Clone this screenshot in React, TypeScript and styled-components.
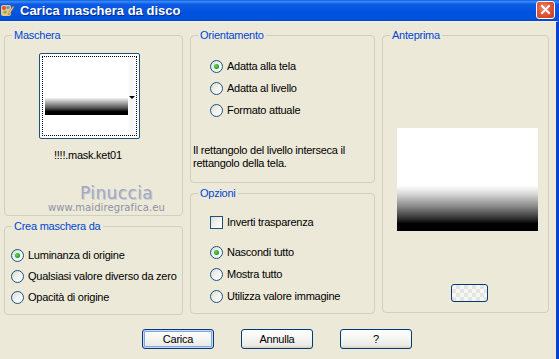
import React from "react";
import styled, { createGlobalStyle } from "styled-components";

const GlobalStyle = createGlobalStyle`
  html, body {
    margin: 0;
    padding: 0;
    background: #ece9d8;
  }
  body {
    font-family: "Liberation Sans", Arial, sans-serif;
    font-size: 11px;
    letter-spacing: -0.25px;
    color: #000;
  }
`;

const Window = styled.div`
  width: 559px;
  height: 359px;
  display: flex;
  flex-direction: column;
  background: #ece9d8;
  overflow: hidden;
`;

const TitleBar = styled.div`
  height: 21px;
  display: flex;
  align-items: center;
  padding: 0 4px 0 0;
  background: linear-gradient(
    to bottom,
    #0a5fe8 0%,
    #3b8bf6 8%,
    #0d5ae3 20%,
    #0053e1 60%,
    #0051dc 88%,
    #0047c5 100%
  );
  color: #fff;
`;

const TitleIcon = styled.div`
  width: 16px;
  height: 16px;
  margin-right: 4px;
  display: flex;
  align-items: center;
`;

const TitleText = styled.div`
  flex: 1;
  font-family: "Liberation Sans", Arial, sans-serif;
  font-weight: bold;
  font-size: 13px;
  letter-spacing: 0;
  text-shadow: 1px 1px 0 #0a2a8a;
`;

const CloseButton = styled.div`
  width: 19px;
  height: 18px;
  margin-top: -2px;
  box-sizing: border-box;
  border: 1px solid #fff;
  border-radius: 3px;
  background: radial-gradient(circle at 40% 35%, #f08c6a 0%, #e0553a 45%, #c8391b 100%);
  display: flex;
  align-items: center;
  justify-content: center;
`;

const Frame = styled.div`
  flex: 1;
  display: flex;
  flex-direction: column;
  border-right: 3px solid #0842d4;
  border-top: 1px solid #f4f2e8;
`;

const Body = styled.div`
  display: grid;
  grid-template-columns: 179px 185px 167px;
  column-gap: 7px;
  padding: 13px 0 0 4px;
`;

const Column = styled.div<{ $gap: number }>`
  display: flex;
  flex-direction: column;
  gap: ${(p) => p.$gap}px;
`;

const Group = styled.div<{ $height: number; $pad?: string }>`
  position: relative;
  box-sizing: border-box;
  height: ${(p) => p.$height}px;
  border: 1px solid #d0d0bf;
  border-radius: 4px;
  padding: ${(p) => p.$pad || "0"};
  display: flex;
  flex-direction: column;
`;

const Legend = styled.span`
  position: absolute;
  top: -8px;
  left: 7px;
  padding: 0 2px 0 2px;
  background: #ece9d8;
  color: #0046d5;
  line-height: 14px;
`;

const MaskThumb = styled.div`
  position: relative;
  box-sizing: border-box;
  width: 101px;
  height: 86px;
  margin-left: 34px;
  border: 1px solid #1c5180;
  border-radius: 2px;
  background: #fff;
  padding: 2px;
`;

const FocusRect = styled.div`
  box-sizing: border-box;
  width: 100%;
  height: 100%;
  border: 1px dotted #000;
  display: flex;
  padding: 0 0 0 2px;
`;

const MaskImage = styled.div`
  width: 83px;
  display: flex;
  flex-direction: column;
  padding-top: 41px;
`;

const MaskBand = styled.div`
  height: 17px;
  background: linear-gradient(to bottom, #f4f4f4 0%, #b0b0b0 25%, #505050 60%, #000 80%, #000 100%);
`;

const ArrowStrip = styled.div`
  flex: 1;
  display: flex;
  justify-content: flex-end;
  padding: 39px 1px 0 0;
  background: linear-gradient(to right, #fff 0%, #f3f3f3 40%, #fafafa 100%);
`;

const Arrow = styled.div`
  width: 0;
  height: 0;
  border-left: 3px solid transparent;
  border-right: 3px solid transparent;
  border-top: 3px solid #000;
`;

const Caption = styled.div`
  margin-top: 10px;
  padding-left: 49px;
  line-height: 13px;
`;

const Watermark = styled.div`
  margin-top: 22px;
  display: flex;
  flex-direction: column;
  align-items: flex-start;
`;

const WaterTitle = styled.div`
  padding-left: 75px;
  font-family: "DejaVu Sans", sans-serif;
  font-size: 17px;
  letter-spacing: 0.4px;
  color: #a6a9bf;
  line-height: 18px;
  text-shadow: 1px 1px 0 #c9cad6;
`;

const WaterUrl = styled.div`
  padding-left: 43px;
  font-family: "DejaVu Sans", sans-serif;
  font-size: 10px;
  letter-spacing: 0.1px;
  color: #8e91a6;
  line-height: 12px;
`;

const OptionList = styled.div<{ $gap: number; $top: number; $left: number }>`
  display: flex;
  flex-direction: column;
  gap: ${(p) => p.$gap}px;
  margin-top: ${(p) => p.$top}px;
  padding-left: ${(p) => p.$left}px;
`;

const Option = styled.label<{ $space?: number }>`
  display: flex;
  align-items: center;
  gap: 4px;
  height: 13px;
  line-height: 13px;
  white-space: nowrap;
  margin-top: ${(p) => p.$space || 0}px;
`;

const RadioCircle = styled.span<{ $on?: boolean }>`
  box-sizing: border-box;
  width: 13px;
  height: 13px;
  border-radius: 50%;
  border: 1px solid #1c5180;
  background: linear-gradient(135deg, #dcdcd5 0%, #f2f2ee 50%, #ffffff 100%);
  display: flex;
  align-items: center;
  justify-content: center;
  flex-shrink: 0;

  &::after {
    content: "";
    display: ${(p) => (p.$on ? "block" : "none")};
    width: 5px;
    height: 5px;
    border-radius: 50%;
    background: radial-gradient(circle at 40% 40%, #5ee05e 0%, #21a121 60%, #1a8a1a 100%);
  }
`;

const CheckBox = styled.span`
  box-sizing: border-box;
  width: 13px;
  height: 13px;
  border: 1px solid #1c5180;
  background: linear-gradient(135deg, #dcdcd5 0%, #f2f2ee 50%, #ffffff 100%);
  flex-shrink: 0;
`;

const Description = styled.p`
  margin: 27px 0 0 2px;
  line-height: 13px;
`;

const Preview = styled.div`
  width: 141px;
  height: 103px;
  margin: 92px 0 0 14px;
  background: linear-gradient(
    to bottom,
    #fff 0%,
    #fff 56%,
    #d8d8d8 64%,
    #8a8a8a 76%,
    #303030 88%,
    #000 93%,
    #000 100%
  );
`;

const SmallButton = styled.div`
  box-sizing: border-box;
  width: 37px;
  height: 18px;
  margin: 53px 0 0 68px;
  border: 1px solid #003c74;
  border-radius: 3px;
  background-color: #f6f6f3;
  background-image: linear-gradient(45deg, #e4e4e0 25%, transparent 25%, transparent 75%, #e4e4e0 75%),
    linear-gradient(45deg, #e4e4e0 25%, transparent 25%, transparent 75%, #e4e4e0 75%);
  background-size: 8px 8px;
  background-position: 0 0, 4px 4px;
`;

const ButtonRow = styled.div`
  display: flex;
  justify-content: center;
  gap: 27px;
  margin-top: 14px;
  padding-right: 2px;
`;

const Button = styled.button<{ $default?: boolean }>`
  box-sizing: border-box;
  width: 72px;
  height: 20px;
  padding: 0;
  border: 1px solid #003c74;
  border-radius: 3px;
  font-family: "Liberation Sans", Arial, sans-serif;
  font-size: 11px;
  letter-spacing: -0.25px;
  color: #000;
  background: linear-gradient(to bottom, #ffffff 0%, #f4f4f0 50%, #ecebe6 85%, #d6d0c5 100%);
  box-shadow: ${(p) =>
    p.$default ? "inset 0 0 0 1px #c6d8f7, inset 0 0 0 2px #7ea6e8" : "none"};
`;

const AppIcon = () => (
  <svg width="15" height="15" viewBox="0 0 15 15">
    <rect x="1" y="2" width="10" height="11" rx="2" fill="#f2c27a" />
    <circle cx="4" cy="5" r="2" fill="#e84c3d" />
    <circle cx="8" cy="4.5" r="1.6" fill="#3aa0e0" />
    <circle cx="5" cy="9" r="1.6" fill="#5cbf4a" />
    <path d="M9 12 L14 4 L13 3 L8 11 Z" fill="#fff3c0" stroke="#8a5a20" strokeWidth="0.6" />
  </svg>
);

const CloseIcon = () => (
  <svg width="11" height="11" viewBox="0 0 11 11">
    <path d="M2 2 L9 9 M9 2 L2 9" stroke="#fff" strokeWidth="2" strokeLinecap="square" />
  </svg>
);

const App: React.FC = () => {
  return (
    <>
      <GlobalStyle />
      <Window>
        <TitleBar>
          <TitleIcon>
            <AppIcon />
          </TitleIcon>
          <TitleText>Carica maschera da disco</TitleText>
          <CloseButton>
            <CloseIcon />
          </CloseButton>
        </TitleBar>
        <Frame>
          <Body>
            <Column $gap={10}>
              <Group $height={181} $pad="17px 0 0 0">
                <Legend>Maschera</Legend>
                <MaskThumb>
                  <FocusRect>
                    <MaskImage>
                      <MaskBand />
                    </MaskImage>
                    <ArrowStrip>
                      <Arrow />
                    </ArrowStrip>
                  </FocusRect>
                </MaskThumb>
                <Caption>!!!!.mask.ket01</Caption>
                <Watermark>
                  <WaterTitle>Pinuccia</WaterTitle>
                  <WaterUrl>www.maidiregrafica.eu</WaterUrl>
                </Watermark>
              </Group>
              <Group $height={89}>
                <Legend>Crea maschera da</Legend>
                <OptionList $gap={8} $top={22} $left={6}>
                  <Option>
                    <RadioCircle $on />
                    Luminanza di origine
                  </Option>
                  <Option>
                    <RadioCircle />
                    Qualsiasi valore diverso da zero
                  </Option>
                  <Option>
                    <RadioCircle />
                    Opacità di origine
                  </Option>
                </OptionList>
              </Group>
            </Column>
            <Column $gap={10}>
              <Group $height={148}>
                <Legend>Orientamento</Legend>
                <OptionList $gap={9} $top={24} $left={19}>
                  <Option>
                    <RadioCircle $on />
                    Adatta alla tela
                  </Option>
                  <Option>
                    <RadioCircle />
                    Adatta al livello
                  </Option>
                  <Option>
                    <RadioCircle />
                    Formato attuale
                  </Option>
                </OptionList>
                <Description>
                  Il rettangolo del livello interseca il
                  <br />
                  rettangolo della tela.
                </Description>
              </Group>
              <Group $height={121}>
                <Legend>Opzioni</Legend>
                <OptionList $gap={9} $top={22} $left={19}>
                  <Option>
                    <CheckBox />
                    Inverti trasparenza
                  </Option>
                  <Option $space={8}>
                    <RadioCircle $on />
                    Nascondi tutto
                  </Option>
                  <Option>
                    <RadioCircle />
                    Mostra tutto
                  </Option>
                  <Option>
                    <RadioCircle />
                    Utilizza valore immagine
                  </Option>
                </OptionList>
              </Group>
            </Column>
            <Column $gap={0}>
              <Group $height={278}>
                <Legend>Anteprima</Legend>
                <Preview />
                <SmallButton />
              </Group>
            </Column>
          </Body>
          <ButtonRow>
            <Button $default>Carica</Button>
            <Button>Annulla</Button>
            <Button>?</Button>
          </ButtonRow>
        </Frame>
      </Window>
    </>
  );
};

export default App;
